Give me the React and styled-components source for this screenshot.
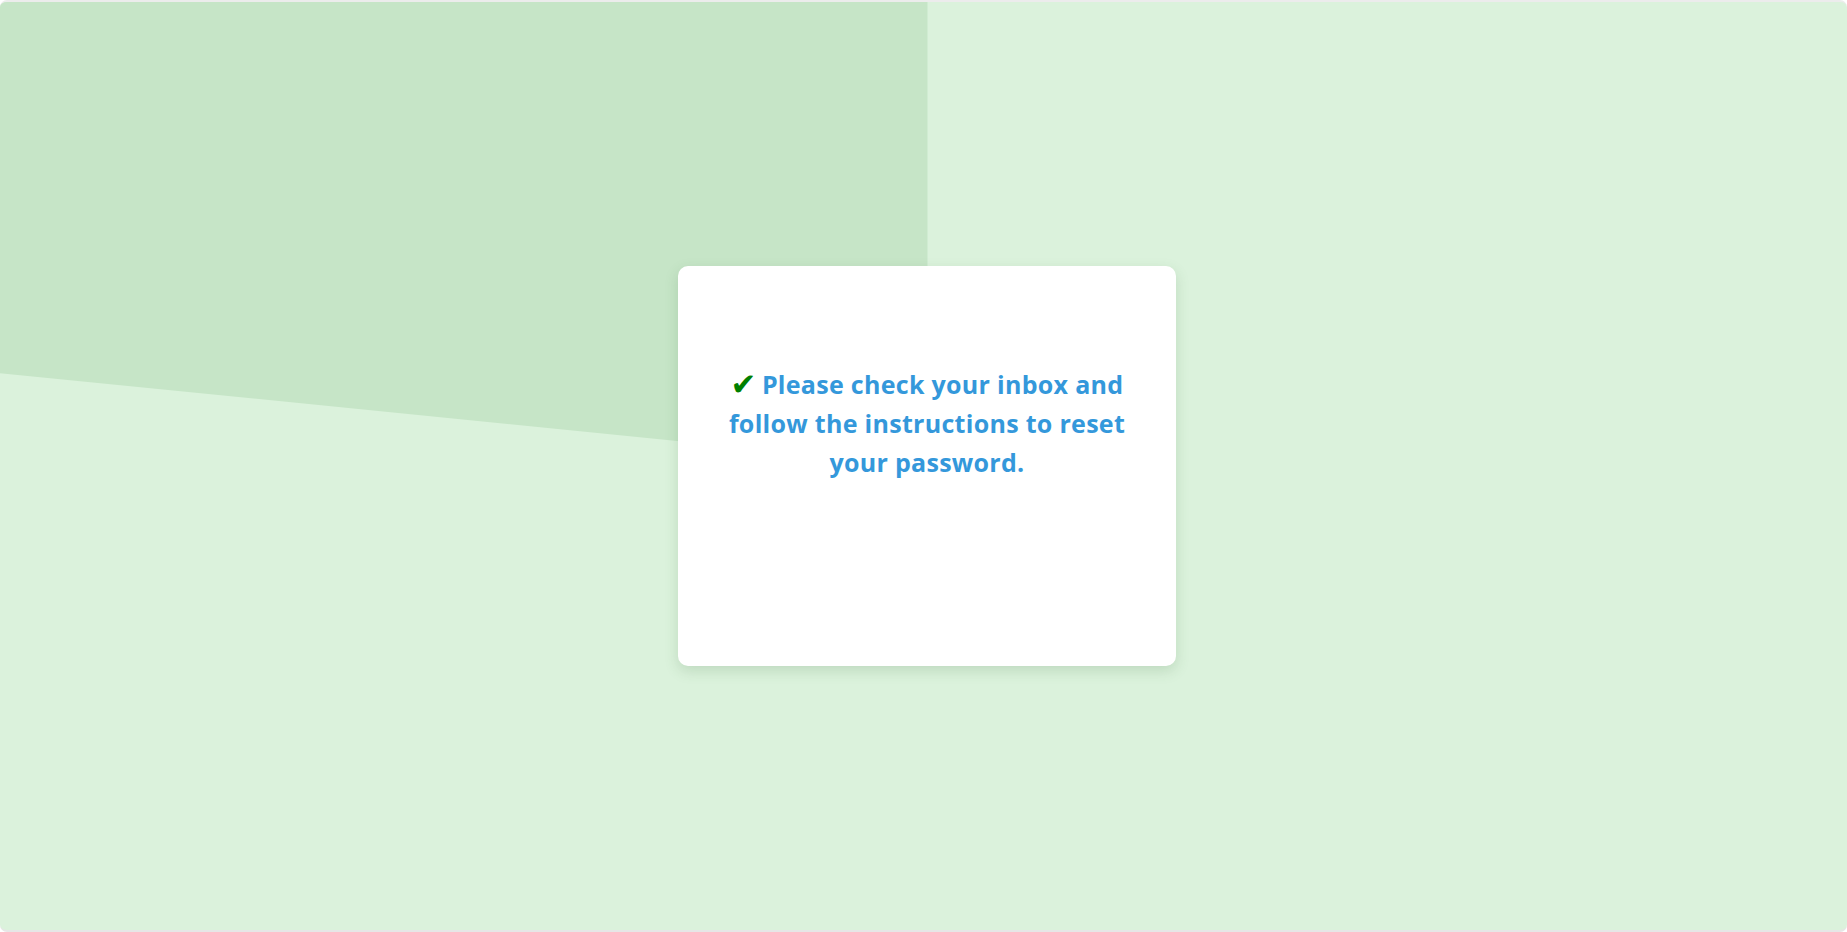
import React from "react";
import styled, { createGlobalStyle } from "styled-components";

const Global = createGlobalStyle`
  html, body { margin: 0; padding: 0; background: #ffffff; }
  body { font-family: "Open Sans", "Liberation Sans", sans-serif; }
  * { box-sizing: border-box; }
`;

const Page = styled.div`
  position: relative;
  height: 100vh;
  overflow: hidden;
  background: #dbf2dc;
  border-radius: 7px;
  border-top: 2px solid #ececec;
  border-bottom: 2px solid #e6e6e6;
  display: flex;
  align-items: center;
  justify-content: center;
  padding-left: 7px;

  &::before {
    content: "";
    position: absolute;
    left: 0;
    top: 0;
    width: calc(50% + 4px);
    height: 50%;
    background: #c6e5c7;
    clip-path: polygon(0 0, 100% 0, 100% 100%, 0 80%);
  }
`;

const Card = styled.div`
  position: relative;
  z-index: 1;
  width: 498px;
  height: 400px;
  background: #ffffff;
  border-radius: 10px;
  box-shadow: 0 5px 14px rgba(60, 110, 60, 0.18);
  padding: 99px 30px 40px;
  text-align: center;
`;

const Message = styled.h2`
  margin: 0;
  font-family: "Open Sans", "Liberation Sans", sans-serif;
  font-weight: 700;
  font-size: 25px;
  line-height: 39px;
  color: #3498db;
  letter-spacing: 0.3px;
`;

const Check = styled.span`
  display: inline-block;
  font-family: "DejaVu Sans", sans-serif;
  color: #008000;
  font-size: 31px;
  line-height: 30px;
  margin-right: 5px;
  vertical-align: -1px;
`;

export default function App() {
  return (
    <>
      <Global />
      <Page>
        <Card>
          <Message>
            <Check>✔</Check>Please check your inbox and follow the instructions to reset your password.
          </Message>
        </Card>
      </Page>
    </>
  );
}
